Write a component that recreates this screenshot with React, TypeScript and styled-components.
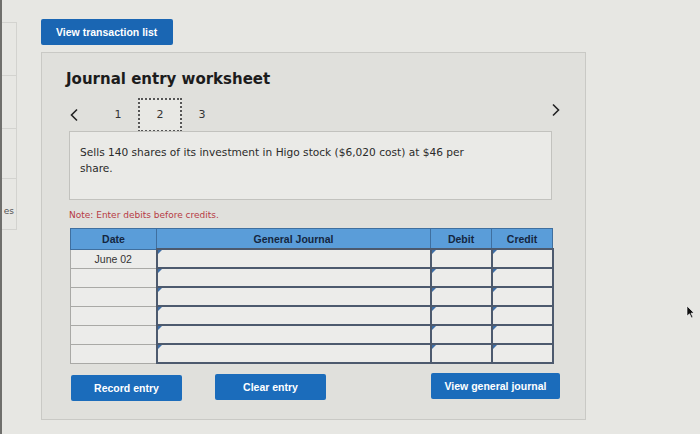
import React from "react";
import styled, { createGlobalStyle } from "styled-components";

const GlobalStyle = createGlobalStyle`
  html, body {
    margin: 0;
    padding: 0;
    background: #e7e7e3;
  }
  body {
    font-family: "DejaVu Sans", Verdana, sans-serif;
    color: #222;
  }
`;

const Page = styled.div`
  position: relative;
  display: flex;
  width: 700px;
  height: 434px;
  overflow: hidden;
  background: #e7e7e3;
`;

const Sidebar = styled.nav`
  width: 17px;
  flex: 0 0 17px;
  border-left: 2px solid #6f6f6c;
  padding-top: 22px;
  box-sizing: border-box;
  display: flex;
  flex-direction: column;
`;

const SideItem = styled.div<{ $h: number }>`
  height: ${(p) => p.$h}px;
  border: 1px solid #d3d3cf;
  border-left: none;
  border-bottom: none;
  display: flex;
  align-items: center;
  font-size: 9px;
  color: #555;
  overflow: hidden;
  white-space: nowrap;
  justify-content: flex-end;
  padding: 14px 2px 0 0;
  box-sizing: border-box;
  &:last-child {
    border-bottom: 1px solid #d3d3cf;
  }
`;

const Main = styled.main`
  padding: 19px 0 0 24px;
  display: flex;
  flex-direction: column;
  align-items: flex-start;
`;

const BlueButton = styled.button<{ $w: number }>`
  flex-shrink: 0;
  width: ${(p) => p.$w}px;
  height: 26px;
  border: none;
  border-radius: 2px;
  background: #1b6cbb;
  color: #fff;
  font-family: "Liberation Sans", Arial, sans-serif;
  font-weight: bold;
  font-size: 10.5px;
  padding: 0;
  cursor: pointer;
`;

const TopButton = styled(BlueButton)`
  background: #1a66b3;
  text-align: left;
  padding-left: 15px;
  font-size: 10.5px;
`;

const Panel = styled.section`
  margin-top: 7px;
  width: 545px;
  height: 368px;
  box-sizing: border-box;
  background: #e0e0dc;
  border: 1px solid #c9c9c5;
  padding: 16px 33px 0 27px;
  display: flex;
  flex-direction: column;
`;

const Title = styled.h1`
  margin: 0 0 0 -3px;
  font-size: 15px;
  font-weight: bold;
  color: #1c1c1c;
  line-height: 20px;
`;

const Pager = styled.div`
  margin-top: 9px;
  height: 33px;
  display: flex;
  align-items: center;
  font-size: 11px;
  color: #333;
`;

const Arrow = styled.span<{ $right?: boolean }>`
  display: flex;
  margin: ${(p) => (p.$right ? "-9px -9px 0 0" : "0 19px 0 0")};
`;

const Step = styled.span<{ $active?: boolean }>`
  width: ${(p) => (p.$active ? 44 : 40)}px;
  height: 34px;
  box-sizing: border-box;
  display: flex;
  align-items: center;
  justify-content: center;
  border: ${(p) => (p.$active ? "2px dotted #555" : "none")};
  background: ${(p) => (p.$active ? "#e8e8e4" : "transparent")};
`;

const Spacer = styled.div`
  flex: 1;
`;

const Description = styled.div`
  height: 69px;
  box-sizing: border-box;
  background: #eaeae7;
  border: 1px solid #c2c2be;
  padding: 12px 10px 0 10px;
  font-size: 10.6px;
  line-height: 16px;
  color: #2a2a2a;
`;

const Note = styled.p`
  margin: 9px 0 0 0;
  font-size: 9px;
  color: #b73a44;
  line-height: 12px;
`;

const Table = styled.table`
  margin-top: 7px;
  margin-left: 1px;
  width: 482px;
  border-collapse: collapse;
  table-layout: fixed;
  font-family: "Liberation Sans", Arial, sans-serif;
`;

const Th = styled.th`
  height: 19px;
  padding: 0;
  background: #5a9dd9;
  border: 1px solid #3f6f9f;
  color: #14263f;
  font-size: 10.5px;
  font-weight: bold;
`;

const DateCell = styled.td`
  height: 17px;
  padding: 0;
  border: 1px solid #a9a9a6;
  background: #ececea;
  text-align: center;
  font-size: 10.5px;
  color: #333;
`;

const InputCell = styled.td`
  position: relative;
  height: 17px;
  padding: 0;
  border: 2px solid #4d5a6e;
  background: #ececea;
  &::before {
    content: "";
    position: absolute;
    top: 0;
    left: 0;
    border-top: 4px solid #3e6ea6;
    border-right: 4px solid transparent;
  }
`;

const Actions = styled.div`
  margin-top: 10px;
  display: flex;
  align-items: flex-start;
`;

const ActionButton = styled(BlueButton)<{ $ml: number; $mt: number }>`
  margin-left: ${(p) => p.$ml}px;
  margin-top: ${(p) => p.$mt}px;
`;

const Cursor = styled.svg`
  position: absolute;
  left: 686px;
  top: 305px;
`;

const rows = ["June 02", "", "", "", "", ""];

export default function App() {
  return (
    <>
      <GlobalStyle />
      <Page>
        <Sidebar>
          <SideItem $h={53} />
          <SideItem $h={53} />
          <SideItem $h={50} />
          <SideItem $h={52}>es</SideItem>
        </Sidebar>
        <Main>
          <TopButton $w={132}>View transaction list</TopButton>
          <Panel>
            <Title>Journal entry worksheet</Title>
            <Pager>
              <Arrow>
                <svg width="10" height="14" viewBox="0 0 10 14">
                  <path d="M8 1.5 L2.5 7 L8 12.5" fill="none" stroke="#222" strokeWidth="1.6" />
                </svg>
              </Arrow>
              <Step>1</Step>
              <Step $active>2</Step>
              <Step>3</Step>
              <Spacer />
              <Arrow $right>
                <svg width="10" height="14" viewBox="0 0 10 14">
                  <path d="M2 1.5 L7.5 7 L2 12.5" fill="none" stroke="#222" strokeWidth="1.6" />
                </svg>
              </Arrow>
            </Pager>
            <Description>
              Sells 140 shares of its investment in Higo stock ($6,020 cost) at $46 per
              <br />
              share.
            </Description>
            <Note>Note: Enter debits before credits.</Note>
            <Table>
              <colgroup>
                <col style={{ width: 86 }} />
                <col style={{ width: 274 }} />
                <col style={{ width: 61 }} />
                <col style={{ width: 61 }} />
              </colgroup>
              <thead>
                <tr>
                  <Th>Date</Th>
                  <Th>General Journal</Th>
                  <Th>Debit</Th>
                  <Th>Credit</Th>
                </tr>
              </thead>
              <tbody>
                {rows.map((d, i) => (
                  <tr key={i}>
                    <DateCell>{d}</DateCell>
                    <InputCell />
                    <InputCell />
                    <InputCell />
                  </tr>
                ))}
              </tbody>
            </Table>
            <Actions>
              <ActionButton $w={111} $ml={2} $mt={1}>Record entry</ActionButton>
              <ActionButton $w={111} $ml={33} $mt={0}>Clear entry</ActionButton>
              <ActionButton $w={129} $ml={105} $mt={-1}>View general journal</ActionButton>
            </Actions>
          </Panel>
        </Main>
        <Cursor width="9" height="14" viewBox="0 0 9 14">
          <path d="M1 1 L1 11 L3.5 8.8 L5.5 13 L7 12.3 L5 8.2 L8 8 Z" fill="#111" stroke="#fff" strokeWidth="0.6" />
        </Cursor>
      </Page>
    </>
  );
}
